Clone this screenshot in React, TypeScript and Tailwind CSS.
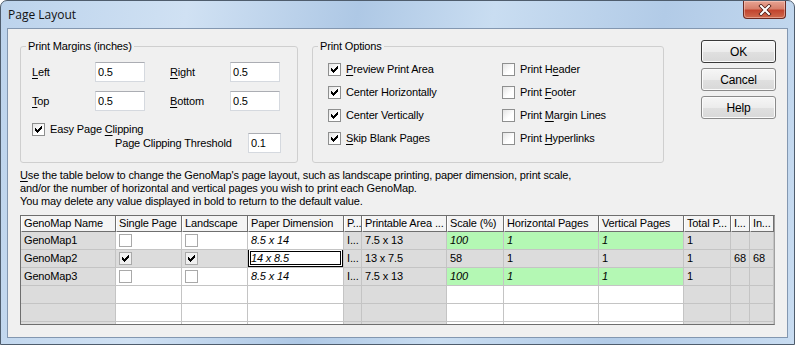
import React from "react";

const U = ({ children }: { children: React.ReactNode }) => (
  <span className="underline decoration-1 underline-offset-[2px]">{children}</span>
);

const CHECK =
  "M6 0h1v1h-1z M5 1h2v1h-2z M0 2h1v1h-1z M4 2h3v1h-3z M0 3h2v1h-2z M3 3h3v1h-3z M0 4h5v1h-5z M1 5h3v1h-3z M2 6h1v1h-1z";

function Check({ checked, table = false, grayFill = false }: { checked?: boolean; table?: boolean; grayFill?: boolean }) {
  return (
    <div
      className={`w-[13px] h-[13px] shrink-0 border flex items-center justify-center ${
        table
          ? `border-[#a9a9a9] ${grayFill ? "bg-[#f0f0f0]" : "bg-white"}`
          : "border-[#8e8f8f] bg-[linear-gradient(135deg,#e4e4e4_0%,#ffffff_60%)]"
      }`}
    >
      {checked && (
        <svg width="7" height="7" viewBox="0 0 7 7" shapeRendering="crispEdges">
          <path d={CHECK} fill="#000" />
        </svg>
      )}
    </div>
  );
}

function TextBox({ value, w = "w-[50px]", h = "h-[20px]" }: { value: string; w?: string; h?: string }) {
  return (
    <div
      className={`${w} ${h} shrink-0 bg-white border border-[#d5d9df] border-t-[#abadb3] flex items-center pl-[2px]`}
    >
      {value}
    </div>
  );
}

function Btn({ label, def = false }: { label: string; def?: boolean }) {
  return (
    <div
      className={`w-[75px] h-[23px] rounded-[3px] border flex items-center justify-center text-[12px] bg-[linear-gradient(#f6f6f6_0%,#ececec_50%,#e0e0e0_51%,#d8d8d8_100%)] shadow-[inset_0_0_0_1px_#fbfbfb] ${
        def ? "border-[#3a3a3a]" : "border-[#8a8a8a]"
      }`}
    >
      {label}
    </div>
  );
}

type CellDef = {
  t?: string;
  bg?: "g" | "w" | "n";
  i?: boolean;
  cb?: boolean;
  checked?: boolean;
  sel?: boolean;
};

const cols = [
  "GenoMap Name",
  "Single Page",
  "Landscape",
  "Paper Dimension",
  "P...",
  "Printable Area ...",
  "Scale (%)",
  "Horizontal Pages",
  "Vertical Pages",
  "Total P...",
  "I...",
  "In...",
];

const rows: CellDef[][] = [
  [
    { t: "GenoMap1", bg: "g" },
    { cb: true, bg: "w" },
    { cb: true, bg: "w" },
    { t: "8.5 x 14", bg: "w", i: true },
    { t: "I...", bg: "g" },
    { t: "7.5 x 13", bg: "g" },
    { t: "100", bg: "n", i: true },
    { t: "1", bg: "n", i: true },
    { t: "1", bg: "n", i: true },
    { t: "1", bg: "g" },
    { bg: "g" },
    { bg: "g" },
  ],
  [
    { t: "GenoMap2", bg: "g" },
    { cb: true, checked: true, bg: "g" },
    { cb: true, checked: true, bg: "g" },
    { t: "14 x 8.5", bg: "w", i: true, sel: true },
    { t: "I...", bg: "g" },
    { t: "13 x 7.5", bg: "g" },
    { t: "58", bg: "g" },
    { t: "1", bg: "g" },
    { t: "1", bg: "g" },
    { t: "1", bg: "g" },
    { t: "68", bg: "g" },
    { t: "68", bg: "g" },
  ],
  [
    { t: "GenoMap3", bg: "g" },
    { cb: true, bg: "w" },
    { cb: true, bg: "w" },
    { t: "8.5 x 14", bg: "w", i: true },
    { t: "I...", bg: "g" },
    { t: "7.5 x 13", bg: "g" },
    { t: "100", bg: "n", i: true },
    { t: "1", bg: "n", i: true },
    { t: "1", bg: "n", i: true },
    { t: "1", bg: "g" },
    { bg: "g" },
    { bg: "g" },
  ],
];

const emptyRow: CellDef[] = ["g", "w", "w", "w", "g", "g", "w", "w", "w", "g", "g", "g"].map((b) => ({
  bg: b as "g" | "w",
}));

const allRows = [...rows, emptyRow, emptyRow, emptyRow];

function BodyCell({ c, rowIdx }: { c: CellDef; rowIdx: number }) {
  const bg = c.bg === "g" ? "bg-[#dcdcdc]" : c.bg === "n" ? "bg-[#b4f8b4]" : "bg-white";
  return (
    <div
      className={`relative h-[18px] border-r border-b border-[#c4c4c4] ${bg} px-[3px] flex items-center overflow-hidden whitespace-nowrap ${
        c.i ? "italic" : ""
      }`}
    >
      {c.cb ? <Check table checked={c.checked} grayFill={rowIdx === 1 && c.checked} /> : c.t}
      {c.sel && (
        <div className="absolute left-0 top-[-1px] right-0 bottom-0 border-[3px] border-double border-black" />
      )}
    </div>
  );
}

export default function App() {
  return (
    <div className="w-[795px] h-[345px] relative overflow-hidden rounded-t-[7px] border border-[#4f5d6d] bg-[linear-gradient(100deg,#bcd3ec_0%,#d0e1f3_22%,#aec8e5_42%,#c9ddf1_58%,#b2cbe7_78%,#c8dcf1_100%)] flex flex-col font-['Liberation_Sans',Arial,sans-serif] text-[11px] tracking-[-0.15px] text-black">
      {/* title bar */}
      <div className="h-[27px] shrink-0 flex items-center pl-[7px] font-['Open_Sans','Noto_Sans',sans-serif] text-[12px] tracking-normal text-[#111]">
        Page Layout
      </div>
      {/* close */}
      <div className="absolute top-0 right-[8px] w-[43px] h-[18px] rounded-b-[4px] border border-t-0 border-[#6b2a22] bg-[linear-gradient(#e8a493_0%,#d7806c_45%,#c2452f_55%,#cf6a4e_100%)] shadow-[inset_0_0_0_1px_rgba(255,220,210,0.45)] flex items-center justify-center">
        <svg width="14" height="12" viewBox="0 0 14 12">
          <path d="M3 2 L11 10 M11 2 L3 10" stroke="#4a1a14" strokeWidth="3.6" strokeLinecap="square" />
          <path d="M3 2 L11 10 M11 2 L3 10" stroke="#ffffff" strokeWidth="2" strokeLinecap="square" />
        </svg>
      </div>

      {/* client */}
      <div className="mx-[6px] h-[310px] shrink-0 border border-[#8397b0] bg-[#f0f0f0] flex flex-col">
        <div className="flex pl-[12px] pt-[10px]">
          {/* Print Margins */}
          <fieldset className="w-[278px] shrink-0 border border-[#cfcfcf] rounded-[3px] pl-[11px] pt-[9px] pb-[9px]">
            <legend className="-ml-[6px] px-[2px] leading-[14px]">Print Margins (inches)</legend>
            <div className="flex items-center h-[20px]">
              <span className="w-[63px]">
                <U>L</U>eft
              </span>
              <TextBox value="0.5" />
              <span className="ml-[25px] w-[60px]">
                <U>R</U>ight
              </span>
              <TextBox value="0.5" />
            </div>
            <div className="flex items-center h-[20px] mt-[9px]">
              <span className="w-[63px]">
                <U>T</U>op
              </span>
              <TextBox value="0.5" />
              <span className="ml-[25px] w-[60px]">
                <U>B</U>ottom
              </span>
              <TextBox value="0.5" />
            </div>
            <div className="flex items-center h-[13px] mt-[12px]">
              <Check checked />
              <span className="ml-[5px]">
                Easy Page <U>C</U>lipping
              </span>
            </div>
            <div className="flex items-center h-[20px] mt-[-3px]">
              <span className="ml-[83px] w-[133px]">Page Clipping Threshold</span>
              <TextBox value="0.1" w="w-[33px]" />
            </div>
          </fieldset>

          {/* Print Options */}
          <fieldset className="ml-[14px] w-[352px] shrink-0 border border-[#cfcfcf] rounded-[3px] pl-[15px] pt-[10px]">
            <legend className="-ml-[10px] px-[2px] leading-[14px]">Print Options</legend>
            <div className="grid grid-cols-[174px_auto] gap-y-[10px]">
              {[
                [<><U>P</U>review Print Area</>, true],
                [<>Print H<U>e</U>ader</>, false],
                [<>Center Horizontally</>, true],
                [<>Print <U>F</U>ooter</>, false],
                [<>Center Vertically</>, true],
                [<>Print <U>M</U>argin Lines</>, false],
                [<><U>S</U>kip Blank Pages</>, true],
                [<>Print <U>H</U>yperlinks</>, false],
              ].map(([label, chk], i) => (
                <div key={i} className="flex items-center h-[13px]">
                  <Check checked={chk as boolean} />
                  <span className="ml-[5px]">{label as React.ReactNode}</span>
                </div>
              ))}
            </div>
          </fieldset>

          {/* Buttons */}
          <div className="ml-[37px] mt-[1px] flex flex-col gap-[5px]">
            <Btn label="OK" def />
            <Btn label="Cancel" />
            <Btn label="Help" />
          </div>
        </div>

        {/* description */}
        <div className="mt-[6px] pl-[12px] leading-[13px]">
          <div>
            <U>U</U>se the table below to change the GenoMap&apos;s page layout, such as landscape printing, paper
            dimension, print scale,
          </div>
          <div>and/or the number of horizontal and vertical pages you wish to print each GenoMap.</div>
          <div>You may delete any value displayed in bold to return to the default value.</div>
        </div>

        {/* table */}
        <div className="mt-[7px] ml-[12px] w-[755px] h-[110px] border border-[#6e6e6e] border-r-[#a0a0a0] overflow-hidden bg-[#f0f0f0]">
          <div className="grid grid-cols-[95px_66px_66px_96px_18px_85px_57px_95px_85px_47px_19px_24px]">
            {cols.map((c) => (
              <div
                key={c}
                className="h-[16px] bg-[#f4f4f4] border-r border-b border-[#6f6f6f] border-l border-l-white px-[2px] flex items-center overflow-hidden whitespace-nowrap"
              >
                {c}
              </div>
            ))}
            {allRows.map((r, ri) =>
              r.map((c, ci) => <BodyCell key={`${ri}-${ci}`} c={c} rowIdx={ri} />)
            )}
          </div>
        </div>
      </div>
    </div>
  );
}
